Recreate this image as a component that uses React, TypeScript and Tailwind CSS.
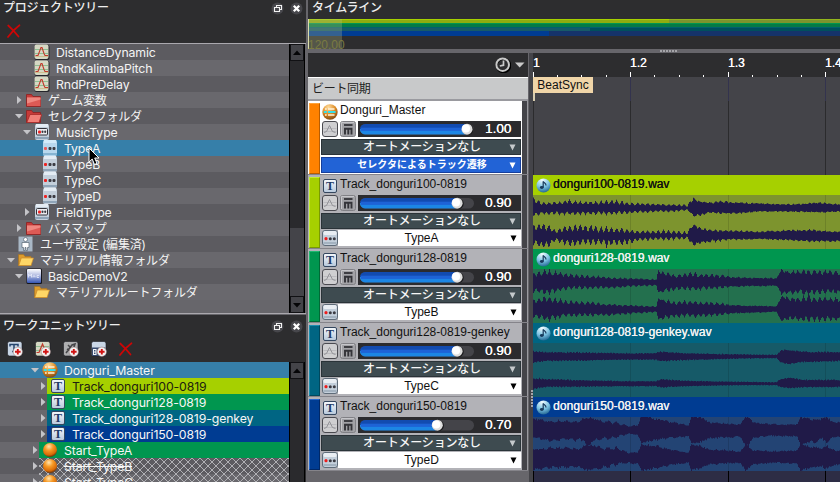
import React from "react";

const LATIN = "font-['Inter','Noto_Sans_CJK_JP',sans-serif]";
const HELV = "font-['Liberation_Sans','Noto_Sans_CJK_JP',sans-serif]";

/* ---------- small icons ---------- */

function GraphIcon() {
  return (
    <svg width="16" height="16" viewBox="0 0 16 16" className="shrink-0">
      <rect x="0.5" y="1" width="15" height="15" rx="2" fill="#24242a" />
      <rect x="0.5" y="0.5" width="14" height="14.5" rx="2" fill="#d6d8c4" />
      <path d="M1 5.5h13M1 9.5h13" stroke="#8fbf93" />
      <path d="M1 12.5h13" stroke="#cdbf90" />
      <path d="M1.500 11.500h2.500L7 3.500h1l2 6 1 2h3" fill="none" stroke="#c0392b" strokeWidth="1.100" />
    </svg>
  );
}

function RedFolder({ open = false }: { open?: boolean }) {
  return (
    <svg width="16" height="16" viewBox="0 0 16 16" className="shrink-0">
      <path d="M0.5 2.5h5l1.500 2h7.500v10h-14z" fill="#c63a38" stroke="#8e2020" strokeWidth="0.8" />
      {open ? (
        <path d="M4 6.500h11.700l-2.600 8H0.800z" fill="#f08078" stroke="#a52a28" strokeWidth="0.8" />
      ) : (
        <path d="M1 5.500h13.500V14H1z" fill="#dc5a55" />
      )}
      {!open && <path d="M1 5.500h13.500v2L1 11.500z" fill="#ee8881" />}
    </svg>
  );
}

function YellowFolder() {
  return (
    <svg width="16" height="16" viewBox="0 0 16 16" className="shrink-0">
      <path d="M0.5 2.5h5l1.500 2h6v9h-12.500z" fill="#dd9c2c" stroke="#a87424" strokeWidth="0.7" />
      <path d="M3.300 6h12.200l-2.400 7.500H0.800z" fill="#ffd766" stroke="#c8892b" strokeWidth="0.7" />
    </svg>
  );
}

function SelectorIcon({ framed = false, light = false }: { framed?: boolean; light?: boolean }) {
  return (
    <svg width="16" height="16" viewBox="0 0 16 16" className="shrink-0">
      <rect x="1" y="0" width="14" height="16" rx="2" fill={light ? "#b8d8ee" : "#c3cfdb"} />
      <rect x="2" y="0" width="12" height="3" fill={light ? "#d3ebfa" : "#e4ecf4"} />
      <rect x="1" y="13" width="14" height="2" fill={light ? "#86b4d2" : "#8fa4b8"} />
      {framed && <rect x="2.500" y="4.500" width="11" height="6.500" rx="1" fill="#ececf0" stroke="#33333a" />}
      <rect x={framed ? 4 : 2} y={framed ? 6.5 : 7} width="3" height="3" rx="1" fill={light ? "#e85a5a" : "#e22"} />
      <rect x={framed ? 7.5 : 6.5} y={framed ? 6.5 : 7} width={framed ? 2 : 3} height={framed ? 2.5 : 3} rx="1" fill="#3b3b42" />
      <rect x={framed ? 10.2 : 10.5} y={framed ? 6.5 : 7} width={framed ? 2 : 3} height={framed ? 2.5 : 3} rx="1" fill="#3b3b42" />
    </svg>
  );
}

function SelectorButtonIcon() {
  return (
    <svg width="16" height="16" viewBox="0 0 16 16" className="shrink-0">
      <rect x="0.500" y="0.500" width="15" height="15" rx="2.500" fill="#c3cfdb" stroke="#5f6c79" />
      <rect x="1.500" y="1" width="13" height="4" rx="1.500" fill="#e9eef3" />
      <rect x="1.500" y="12" width="13" height="2" fill="#a3b2c0" />
      <circle cx="4" cy="8.700" r="1.600" fill="#ee1c1c" />
      <circle cx="8.300" cy="8.700" r="1.500" fill="#3b3b42" />
      <circle cx="12.300" cy="8.700" r="1.500" fill="#3b3b42" />
    </svg>
  );
}

function UserIcon() {
  return (
    <svg width="16" height="16" viewBox="0 0 16 16" className="shrink-0">
      <rect x="0.500" y="0.500" width="14" height="15" fill="#a9b8c6" />
      <circle cx="7.500" cy="3.500" r="2" fill="#fff" stroke="#586572" strokeWidth="0.700" />
      <path d="M4 6.500h7v5H9.500v3h-1.500v-3h-1v3H5.500v-3H4z" fill="#fff" stroke="#586572" strokeWidth="0.700" />
    </svg>
  );
}

function MacIcon() {
  return (
    <svg width="16" height="16" viewBox="0 0 16 16" className="shrink-0">
      <defs>
        <linearGradient id="mac" x1="0" y1="0" x2="0" y2="1">
          <stop offset="0" stopColor="#fff" />
          <stop offset="0.450" stopColor="#b4bde2" />
          <stop offset="1" stopColor="#3656b4" />
        </linearGradient>
      </defs>
      <rect x="0.500" y="0.500" width="15.500" height="15.500" rx="1.500" fill="#15151c" />
      <rect x="1" y="1" width="14" height="14" rx="1" fill="url(#mac)" />
      <path d="M2.500 9.500V6l1.500 2 1.500-2v3.500M7 9.500V8h2v1.500M13 7.500h-2v2h2" fill="none" stroke="#e9ecfa" strokeWidth="0.800" />
    </svg>
  );
}

function TIcon() {
  return (
    <span className="flex h-[14px] w-[14px] shrink-0 items-center justify-center rounded-[2px] border border-[#34475f] bg-gradient-to-b from-[#f2f6fa] to-[#b9cadd] font-['Liberation_Serif',serif] text-[12px] leading-none font-bold text-[#1d3a64]">
      T
    </span>
  );
}

function MasterBall() {
  return (
    <svg width="16" height="16" viewBox="0 0 16 16" className="block shrink-0">
      <defs>
        <radialGradient id="mball" cx="0.4" cy="0.2" r="0.9">
          <stop offset="0" stopColor="#ffdc9c" />
          <stop offset="0.500" stopColor="#dd8a24" />
          <stop offset="1" stopColor="#6b3c10" />
        </radialGradient>
      </defs>
      <circle cx="8" cy="8" r="7.700" fill="url(#mball)" />
      <path d="M3 5h1.700M6 5h6.500M3 11h1.700M6 11h6.500" stroke="#fff3dc" strokeWidth="1.500" />
      <path d="M1.800 8h3M6 8h7.500" stroke="#35dfe8" strokeWidth="2" />
    </svg>
  );
}

function OrangeBall() {
  return (
    <svg width="16" height="16" viewBox="0 0 16 16" className="shrink-0">
      <defs>
        <radialGradient id="oball" cx="0.42" cy="0.25" r="0.75">
          <stop offset="0" stopColor="#ffe4b0" />
          <stop offset="0.400" stopColor="#f79a26" />
          <stop offset="0.800" stopColor="#d86a08" />
          <stop offset="1" stopColor="#6b3206" />
        </radialGradient>
      </defs>
      <circle cx="8" cy="8" r="7" fill="url(#oball)" />
    </svg>
  );
}

function WaveBall() {
  return (
    <svg width="15" height="15" viewBox="0 0 15 15" className="shrink-0">
      <defs>
        <radialGradient id="wball" cx="0.4" cy="0.1" r="0.95">
          <stop offset="0" stopColor="#f4fcff" />
          <stop offset="0.550" stopColor="#7cc4e4" />
          <stop offset="1" stopColor="#1b5f8c" />
        </radialGradient>
      </defs>
      <circle cx="7.500" cy="7.500" r="7" fill="url(#wball)" />
      <path d="M7.200 3.500v6" stroke="#173a5c" strokeWidth="1.200" />
      <path d="M7.200 3.500c.5 1.500 3 1.500 2.800 4" fill="none" stroke="#173a5c" strokeWidth="1.200" />
      <ellipse cx="5.800" cy="9.500" rx="1.900" ry="1.400" fill="#173a5c" />
    </svg>
  );
}

function RedX() {
  return (
    <svg width="14" height="14" viewBox="0 0 14 14" className="shrink-0">
      <path d="M1.200 1.500C4 4 8 8 11.500 12.500M12.500 1.200C8 4.500 4.500 8 1 13" fill="none" stroke="#cc0606" strokeWidth="1.700" strokeLinecap="round" />
    </svg>
  );
}

function AddIcon({ kind }: { kind: "t" | "g" | "r" | "b" }) {
  return (
    <svg width="16" height="16" viewBox="0 0 16 16" className="shrink-0">
      <rect x="0.500" y="0.500" width="14.500" height="14.500" rx="2" fill={kind === "r" ? "#aeaeb0" : kind === "g" ? "#d6d8c4" : "#c9d6e6"} stroke="#1d1d22" strokeWidth="0.600" />
      {kind === "t" && <path d="M3 5.500V3.500h8v2M7 3.500v7M5.200 10.500H9" fill="none" stroke="#24436c" strokeWidth="1.500" />}
      {kind === "g" && (
        <>
          <path d="M1 5.500h13M1 9.500h13" stroke="#8fbf93" />
          <path d="M1.500 11.500h2.500L7.500 3l3 7" fill="none" stroke="#c0392b" strokeWidth="1.200" />
        </>
      )}
      {kind === "r" && <path d="M3 12l6-8 3-1-1 3-4 4M5 4l3 3M4 8l5 3" fill="none" stroke="#454548" strokeWidth="1.500" />}
      {kind === "b" && (
        <>
          <rect x="1" y="6.500" width="13.500" height="8.500" fill="#35486c" />
          <path d="M2.500 8.500h2.500v5H2.500zM2.500 11h2.500" fill="none" stroke="#f1f4fa" strokeWidth="1.100" />
        </>
      )}
      <circle cx="10.800" cy="10.800" r="4.700" fill="#f4f1f1" stroke="#8d7070" strokeWidth="0.500" />
      <path d="M10.800 8v5.600M8 10.800h5.600" stroke="#d01414" strokeWidth="1.900" />
    </svg>
  );
}

function Arrow({ dir }: { dir: "right" | "down" | "none" }) {
  return (
    <svg width="8" height="8" viewBox="0 0 8 8" className="shrink-0">
      {dir === "right" && <path d="M2 0v8l4.500-4z" fill="#c4c4c8" />}
      {dir === "down" && <path d="M0 2h8L4 6.500z" fill="#c4c4c8" />}
    </svg>
  );
}

/* ---------- panel chrome ---------- */

function PanelTitle({ title }: { title: string }) {
  return (
    <div className="flex h-4 items-center pr-[3px] pl-[3px]">
      <span className={`${LATIN} text-[12px] leading-4 font-medium tracking-[-0.250px] text-[#eeeeee]`}>{title}</span>
      <svg width="32" height="13" viewBox="0 0 32 13" className="ml-auto">
        <circle cx="6.500" cy="6.500" r="6" fill="#47474c" />
        <path d="M5.500 5V3.500h5v4H9M3.500 5.500h5v4h-5z" fill="none" stroke="#f2f2f2" strokeWidth="1.100" />
        <circle cx="25.500" cy="6.500" r="6" fill="#47474c" />
        <path d="M22.800 3.800l5.400 5.400M28.200 3.800l-5.400 5.400" stroke="#fff" strokeWidth="2.300" />
      </svg>
    </div>
  );
}

function ScrollButton({ up = false }: { up?: boolean }) {
  return (
    <div className="flex h-[17px] shrink-0 items-center justify-center border border-[#111114] bg-[#444449]">
      <svg width="8" height="6" viewBox="0 0 8 6">
        <path d={up ? "M4 0.500L8 5H0z" : "M4 5.500L8 1H0z"} fill="#050507" />
      </svg>
    </div>
  );
}

/* ---------- project tree ---------- */

type TreeRow = { indent: number; arrow?: "right" | "down"; icon: React.ReactNode; text: string; jp?: boolean; selected?: boolean };

const projectRows: TreeRow[] = [
  { indent: 34, icon: <GraphIcon />, text: "DistanceDynamic" },
  { indent: 34, icon: <GraphIcon />, text: "RndKalimbaPitch" },
  { indent: 34, icon: <GraphIcon />, text: "RndPreDelay" },
  { indent: 26, arrow: "right", icon: <RedFolder />, text: "ゲーム変数", jp: true },
  { indent: 26, arrow: "down", icon: <RedFolder open />, text: "セレクタフォルダ", jp: true },
  { indent: 34, arrow: "down", icon: <SelectorIcon framed />, text: "MusicType" },
  { indent: 42, icon: <SelectorIcon light />, text: "TypeA", selected: true },
  { indent: 42, icon: <SelectorIcon />, text: "TypeB" },
  { indent: 42, icon: <SelectorIcon />, text: "TypeC" },
  { indent: 42, icon: <SelectorIcon />, text: "TypeD" },
  { indent: 34, arrow: "right", icon: <SelectorIcon framed />, text: "FieldType" },
  { indent: 26, arrow: "right", icon: <RedFolder />, text: "バスマップ", jp: true },
  { indent: 18, icon: <UserIcon />, text: "ユーザ設定 (編集済)", jp: true },
  { indent: 18, arrow: "down", icon: <YellowFolder />, text: "マテリアル情報フォルダ", jp: true },
  { indent: 26, arrow: "down", icon: <MacIcon />, text: "BasicDemoV2" },
  { indent: 34, icon: <YellowFolder />, text: "マテリアルルートフォルダ", jp: true },
];

function ProjectTree() {
  return (
    <div className="flex h-[314px] shrink-0 flex-col bg-[#2d2d2f]">
      <div className="h-[43px] shrink-0">
        <PanelTitle title="プロジェクトツリー" />
        <div className="pt-[8px] pl-[7px]">
          <RedX />
        </div>
      </div>
      <div className="flex h-[271px] border-y border-[#aaa8ae] bg-[#67666b]">
        <div className="w-[289px]">
          {projectRows.map((r, i) => (
            <div key={i} className={`flex h-4 items-center ${r.selected ? "bg-[#367fa9]" : i % 2 ? "bg-[#69686d]" : "bg-[#5c5b60]"}`}>
              <div className="flex shrink-0 justify-end pr-[3px]" style={{ width: r.indent }}>
                <Arrow dir={r.arrow ?? "none"} />
              </div>
              {r.icon}
              <span
                className={`${LATIN} ml-[6px] pt-[2px] leading-[14px] whitespace-nowrap text-[#f4f4f4] ${r.jp ? "text-[12px] tracking-[-0.200px]" : "text-[12.300px] tracking-[-0.120px]"}`}
              >
                {r.text}
              </span>
            </div>
          ))}
        </div>
        <div className="flex w-4 flex-col border-x border-black bg-[#2a2a2d]">
          <ScrollButton up />
          <div className="flex-1" />
          <div className="h-[68px] bg-[#444449]" />
          <ScrollButton />
        </div>
      </div>
    </div>
  );
}

/* ---------- work unit tree ---------- */

const unitRows = [
  { text: "Donguri_Master", bg: "bg-[#367fa9]", row: "bg-[#367fa9]", kind: "master" },
  { text: "Track_donguri100-0819", bg: "bg-[#a6d000]", row: "bg-[#69686d]", kind: "track", dark: true },
  { text: "Track_donguri128-0819", bg: "bg-[#00964f]", row: "bg-[#5c5b60]", kind: "track" },
  { text: "Track_donguri128-0819-genkey", bg: "bg-[#006583]", row: "bg-[#69686d]", kind: "track" },
  { text: "Track_donguri150-0819", bg: "bg-[#003c92]", row: "bg-[#5c5b60]", kind: "track" },
  { text: "Start_TypeA", bg: "bg-[#00964f]", row: "bg-[#69686d]", kind: "start" },
  { text: "Start_TypeB", bg: "hatch", row: "bg-[#5c5b60]", kind: "start" },
  { text: "Start_TypeC", bg: "hatch", row: "bg-[#69686d]", kind: "start" },
];

const HATCH =
  "bg-[repeating-linear-gradient(45deg,#b0b0b4_0px,#b0b0b4_0.900px,transparent_0.900px,transparent_5.657px),repeating-linear-gradient(-45deg,#b0b0b4_0px,#b0b0b4_0.900px,transparent_0.900px,transparent_5.657px)]";

function UnitTree() {
  return (
    <div className="flex h-[168px] shrink-0 flex-col overflow-hidden border-t border-[#67666b] bg-[#2d2d2f]">
      <div className="h-[47px] shrink-0 pt-[3px]">
        <PanelTitle title="ワークユニットツリー" />
        <div className="flex items-center gap-3 pt-[7px] pl-[7px]">
          <AddIcon kind="t" />
          <AddIcon kind="g" />
          <AddIcon kind="r" />
          <AddIcon kind="b" />
          <RedX />
        </div>
      </div>
      <div className="flex h-[130px]">
        <div className="w-[289px]">
          {unitRows.map((r, i) => (
            <div key={i} className={`flex h-4 items-center ${r.row}`}>
              <div className={`flex shrink-0 items-center justify-end ${r.kind === "track" ? "w-[47px]" : "w-[39px]"}`}>
                <Arrow dir={i === 0 ? "down" : "right"} />
              </div>
              <div className={`flex h-4 flex-1 items-center ${r.bg === "hatch" ? HATCH : r.bg} ${r.kind === "track" ? "pl-1" : "pl-[3px]"}`}>
                {r.kind === "master" ? <MasterBall /> : r.kind === "start" ? <OrangeBall /> : <TIcon />}
                <span
                  className={`${LATIN} pt-[2px] leading-[14px] whitespace-nowrap text-[12.300px] tracking-[-0.120px] ${r.kind === "track" ? "ml-[7px]" : "ml-[6px]"} ${r.dark ? "text-[#202010]" : "text-[#f6f6f6]"} ${r.bg === "hatch" ? "line-through" : ""}`}
                >
                  {r.text}
                </span>
              </div>
            </div>
          ))}
        </div>
        <div className="flex w-4 flex-col border-x border-black bg-[#2a2a2d]">
          <ScrollButton up />
        </div>
      </div>
    </div>
  );
}

/* ---------- track headers ---------- */

const tracks = [
  { name: "Donguri_Master", bar: "bg-[#ff8200] border-l-[#ffa238] border-t-[#ffa238] border-r-[#b95d00] border-b-[#b95d00]", vol: 1, type: "" },
  { name: "Track_donguri100-0819", bar: "bg-[#a6d000] border-l-[#c4ee30] border-t-[#c4ee30] border-r-[#7a9a00] border-b-[#7a9a00]", vol: 0.9, type: "TypeA" },
  { name: "Track_donguri128-0819", bar: "bg-[#00964f] border-l-[#20b870] border-t-[#20b870] border-r-[#006a36] border-b-[#006a36]", vol: 0.9, type: "TypeB" },
  { name: "Track_donguri128-0819-genkey", bar: "bg-[#006583] border-l-[#1a8fb0] border-t-[#1a8fb0] border-r-[#00485e] border-b-[#00485e]", vol: 0.9, type: "TypeC" },
  { name: "Track_donguri150-0819", bar: "bg-[#003c92] border-l-[#2468d0] border-t-[#2468d0] border-r-[#002868] border-b-[#002868]", vol: 0.7, type: "TypeD" },
];

function VolumeRow({ vol }: { vol: number }) {
  const x = 9 + vol * 99;
  return (
    <div className="flex h-4">
      <svg width="16" height="16" viewBox="0 0 16 16" className="ml-px">
        <rect x="0.500" y="0.500" width="15" height="15" rx="2.500" fill="#cfcfd1" stroke="#4a4a50" />
        <path d="M1.500 7.500h13M1.500 10.500h13" stroke="#b6b6ba" strokeWidth="0.800" />
        <path d="M2 11.500l2.500-1 3-6 3 6 3 1" fill="none" stroke="#939398" />
      </svg>
      <svg width="16" height="16" viewBox="0 0 16 16" className="ml-[2px]">
        <rect x="0.500" y="0.500" width="15" height="15" rx="2" fill="#a2a2a6" stroke="#808085" />
        <path d="M1.500 14V1.500H14" fill="none" stroke="#c6c6ca" />
        <path d="M4 4h8.500" stroke="#333338" strokeWidth="1.800" />
        <path d="M5 13.500V7.800h6.500v5.700M8.300 8v5.500" fill="none" stroke="#333338" strokeWidth="1.900" />
      </svg>
      <div className="ml-[2px] flex w-[163px] items-center bg-[#2b2b2e]">
        <svg width="120" height="16" viewBox="0 0 120 16">
          <rect x="2" y="3" width="114" height="10.500" rx="5.200" fill="#444449" />
          <path d={`M${x} 3H7a5 5 0 0 0-5 5.200H${x}z`} fill="#124bb0" />
          <path d={`M${x} 13.500H7a5 5 0 0 1-5-5.500H${x}z`} fill="#1c86e4" />
          <rect x="3" y="6.700" width={x - 3} height="3.200" fill="#1e63d6" />
          <ellipse cx={x + 2} cy="8.700" rx="5.600" ry="5.500" fill="#18181a" />
          <circle cx={x + 1} cy="8.200" r="5.500" fill="#dedede" />
          <circle cx={x} cy="7.500" r="4" fill="#ffffff" />
        </svg>
        <span className={`${HELV} ml-[7px] text-[13.500px] leading-4 text-white [text-shadow:0.300px_0_0_#fff]`}>{vol.toFixed(2)}</span>
      </div>
    </div>
  );
}

function Drop({ color = "#fff" }: { color?: string }) {
  return (
    <svg width="7" height="7" viewBox="0 0 7 7" className="mr-[4px] shrink-0">
      <path d="M0.500 0.500h6L3.500 6.500z" fill={color} />
    </svg>
  );
}

function TrackHeader({ t }: { t: (typeof tracks)[number] }) {
  const master = t.type === "";
  return (
    <div className={`flex h-[74px] border-b border-[#85848a] ${master ? "bg-white" : "bg-[#b2b2b7]"}`}>
      <div className={`mt-[2px] ml-[1px] h-[71px] w-[11px] border ${t.bar}`} />
      <div className="ml-px flex w-[200px] flex-col">
        <div className="flex h-5 items-center pl-px">
          {master ? (
            <span className="pt-[2px]">
              <MasterBall />
            </span>
          ) : (
            <span className="mx-px mt-[2px]">
              <TIcon />
            </span>
          )}
          <span className={`${HELV} mb-[3px] ml-[2px] whitespace-nowrap text-[12px] leading-4 text-[#111]`}>{t.name}</span>
        </div>
        <VolumeRow vol={t.vol} />
        <div className="mt-[2px] flex h-4 items-center border border-[#2a3338] bg-[#3e4b50]">
          <span className={`${HELV} flex-1 pl-[13px] text-center text-[12px] leading-[14px] font-medium tracking-[-0.200px] text-[#f6f6f6]`}>オートメーションなし</span>
          <Drop color="#c5cacc" />
        </div>
        {master ? (
          <div className="mt-[2px] flex h-4 items-center border border-[#163f9c] bg-[#2263d6]">
            <span className={`${HELV} flex-1 pl-[13px] text-center text-[10px] leading-[14px] font-bold text-white`}>セレクタによるトラック遷移</span>
            <Drop />
          </div>
        ) : (
          <div className="mt-px flex h-4 items-center bg-[#b2b2b7] pl-px">
            <SelectorButtonIcon />
            <div className="flex h-4 flex-1 items-center bg-white">
              <span className={`${HELV} flex-1 pr-[5px] text-center text-[12px] leading-4 text-[#111]`}>{t.type}</span>
              <Drop color="#000" />
            </div>
          </div>
        )}
      </div>
      <div className="ml-px w-[5px] bg-[#444449]" />
      <div className="flex-1 bg-[#9a9a9f]" />
    </div>
  );
}

/* ---------- waveforms ---------- */

/* Envelope knot: x, upward amplitude, downward amplitude, spike depth (0..1). */
type Knot = [number, number, number, number];

function sample(knots: Knot[], x: number, k: 1 | 2 | 3) {
  let i = 0;
  while (i < knots.length - 2 && knots[i + 1][0] <= x) i++;
  const a = knots[i];
  const b = knots[i + 1];
  const f = Math.min(1, Math.max(0, (x - a[0]) / (b[0] - a[0])));
  return a[k] + (b[k] - a[k]) * f;
}

function noise(n: number) {
  const s = Math.sin(n * 12.9898 + 4.1) * 43758.5453;
  return s - Math.floor(s);
}

function wavePath(knots: Knot[], cy: number, period: number, seed: number) {
  const up: string[] = [];
  const down: string[] = [];
  for (let x = 0; x < 307; x++) {
    const d = sample(knots, x, 3);
    const beat = Math.floor(x / period);
    const ripple = 0.5 + 0.5 * Math.cos((2 * Math.PI * x) / period);
    const peakU = 1.1 - 0.45 * d * noise(beat + seed);
    const peakD = 1.1 - 0.45 * d * noise(beat + seed + 300);
    const u = sample(knots, x, 1) * peakU * (1 - d * (1 - ripple)) * (1 - 0.18 * noise(x + seed));
    const v = sample(knots, x, 2) * peakD * (1 - d * (1 - ripple)) * (1 - 0.18 * noise(x + seed + 500));
    up.push(`L${x} ${(cy - u).toFixed(1)}L${x + 1} ${(cy - u).toFixed(1)}`);
    down.push(`L${x + 1} ${(cy + v).toFixed(1)}L${x} ${(cy + v).toFixed(1)}`);
  }
  return `M0 ${cy}${up.join("")}${down.reverse().join("")}Z`;
}

type Lane = { name: string; head: string; body: string; text: string; period: number; cy: [number, number]; ch: [Knot[], Knot[]] };

const lanes: Lane[] = [
  {
    name: "donguri100-0819.wav", head: "bg-[#a6d000]", body: "bg-[#7d942e]", text: "text-[#111]", period: 5.2, cy: [13, 40.5],
    ch: [
      [[0, 11, 9, 0.4], [8, 6, 7, 0.4], [30, 7, 7, 0.4], [36, 9, 8, 0.4], [55, 7, 7, 0.45], [84, 9, 7, 0.5], [95, 6, 7, 0.5], [108, 5, 5, 0.4], [140, 4, 4, 0.4], [154, 4, 3, 0.6], [160, 11, 9, 0.15], [166, 7, 8, 0.2], [176, 6, 5, 0.2], [192, 7, 6, 0.2], [205, 6, 6, 0.2], [225, 5, 4, 0.2], [260, 4, 4, 0.2], [285, 6, 5, 0.2], [307, 4, 4, 0.2]],
      [[0, 13, 11, 0.5], [14, 12, 14, 0.5], [22, 6, 6, 0.5], [34, 11, 11, 0.55], [60, 12, 11, 0.6], [82, 8, 13, 0.6], [96, 7, 9, 0.6], [106, 5, 5, 0.5], [130, 6, 5, 0.6], [154, 5, 5, 0.7], [160, 12, 10, 0.15], [168, 7, 8, 0.2], [180, 6, 7, 0.3], [195, 6, 5, 0.3], [225, 4, 4, 0.2], [255, 6, 5, 0.2], [278, 6, 7, 0.2], [307, 4, 6, 0.2]],
    ],
  },
  {
    name: "donguri128-0819.wav", head: "bg-[#00964f]", body: "bg-[#23704e]", text: "text-[#f2f2f2]", period: 5.4, cy: [13, 40],
    ch: [
      [[0, 10, 11, 0.4], [14, 13, 13, 0.4], [30, 10, 9, 0.4], [50, 8, 8, 0.4], [75, 5, 7, 0.3], [100, 4, 5, 0.3], [123, 3, 4, 0.3], [125, 12, 12, 0.2], [140, 8, 9, 0.4], [160, 10, 9, 0.4], [190, 8, 7, 0.4], [197, 5, 5, 0.15], [243, 4, 4, 0.15], [248, 13, 13, 0.1], [258, 12, 12, 0.3], [275, 14, 14, 0.4], [307, 11, 12, 0.3]],
      [[0, 10, 10, 0.4], [14, 13, 13, 0.4], [30, 10, 9, 0.4], [50, 8, 8, 0.4], [75, 5, 7, 0.3], [100, 4, 5, 0.3], [123, 3, 4, 0.3], [125, 12, 11, 0.2], [140, 8, 9, 0.4], [160, 9, 9, 0.4], [190, 7, 7, 0.4], [197, 4, 5, 0.15], [243, 3, 3, 0.15], [248, 13, 13, 0.1], [258, 12, 11, 0.3], [275, 14, 14, 0.4], [307, 11, 12, 0.3]],
    ],
  },
  {
    name: "donguri128-0819-genkey.wav", head: "bg-[#006583]", body: "bg-[#165a68]", text: "text-[#f2f2f2]", period: 3.1, cy: [13.5, 40.5],
    ch: [
      [[0, 6, 7, 0.2], [12, 5, 5, 0.2], [50, 4.5, 4.5, 0.2], [90, 3.5, 3.5, 0.15], [122, 3.5, 3.5, 0.15], [128, 5.5, 5, 0.2], [150, 3.5, 4, 0.15], [200, 2.5, 2.5, 0.2], [243, 2, 2, 0.3], [247, 6, 6, 0.1], [255, 7, 8, 0.1], [270, 5, 6, 0.1], [307, 5, 5, 0.2]],
      [[0, 6, 6, 0.2], [12, 5, 4, 0.2], [50, 3.5, 3.5, 0.2], [90, 2.5, 3, 0.15], [122, 2.5, 3, 0.15], [128, 5, 4.5, 0.2], [150, 3, 3, 0.15], [200, 2, 2, 0.2], [243, 1.5, 2, 0.3], [247, 5, 4, 0.1], [255, 6, 5, 0.1], [270, 4, 4, 0.1], [307, 4, 4, 0.2]],
    ],
  },
  {
    name: "donguri150-0819.wav", head: "bg-[#003c92]", body: "bg-[#234474]", text: "text-[#f2f2f2]", period: 8.3, cy: [13, 40],
    ch: [
      [[0, 13, 8, 0.1], [15, 10, 12, 0.2], [30, 10, 11, 0.2], [45, 9, 11, 0.2], [51, 12, 11, 0.1], [54, 13, 18, 0.05], [60, 12, 11, 0.1], [70, 10, 10, 0.2], [82, 9, 9, 0.3], [95, 4, 4, 0.2], [104, 5, 5, 0.1], [108, 14, 13, 0.05], [125, 11, 10, 0.1], [140, 8, 8, 0.1], [155, 5, 7, 0.1], [158, 14, 14, 0.05], [168, 13, 12, 0.05], [175, 8, 9, 0.1], [207, 6, 7, 0.1], [212, 14, 16, 0.05], [214, 14, 16, 0.05], [220, 8, 8, 0.1], [240, 6, 6, 0.1], [264, 6, 7, 0.1], [267, 14, 15, 0.05], [276, 12, 13, 0.1], [283, 11, 14, 0.2], [289, 12, 9, 0.1], [294, 14, 15, 0.1], [298, 9, 8, 0.1], [307, 8, 7, 0.1]],
      [[0, 8, 13, 0.1], [15, 10, 12, 0.2], [30, 10, 12, 0.2], [45, 9, 11, 0.2], [54, 13, 14, 0.05], [62, 12, 13, 0.1], [70, 10, 12, 0.2], [82, 11, 9, 0.3], [95, 5, 7, 0.2], [104, 5, 7, 0.1], [108, 13, 14, 0.05], [125, 11, 11, 0.1], [140, 7, 8, 0.1], [155, 5, 6, 0.1], [158, 13, 14, 0.05], [168, 11, 11, 0.05], [175, 8, 8, 0.1], [207, 6, 6, 0.1], [212, 13, 14, 0.05], [220, 7, 8, 0.1], [240, 6, 6, 0.1], [264, 7, 7, 0.1], [267, 13, 14, 0.05], [276, 11, 12, 0.1], [289, 9, 10, 0.1], [294, 12, 13, 0.1], [298, 8, 9, 0.1], [307, 6, 8, 0.1]],
    ],
  },
];

const beats = [
  { label: "1", left: "left-0" },
  { label: "1.2", left: "left-[97px]" },
  { label: "1.3", left: "left-[195px]" },
  { label: "1.4", left: "left-[292px]" },
];

function Timeline() {
  return (
    <div className="flex w-[307px] flex-col overflow-hidden bg-[#444449]">
      <div className="relative h-6 shrink-0 bg-[#2d2d2f]">
        {beats.map((b) => (
          <span key={b.label} className={`${HELV} absolute top-[2px] text-[12px] leading-4 text-white [text-shadow:0.300px_0_0_#fff] ${b.left}`}>
            {b.label}
          </span>
        ))}
        <svg width="307" height="5" className="absolute bottom-0 left-0" shapeRendering="crispEdges">
          <path d="M0 0h1v5h-1zM97 0h1v5h-1zM195 0h1v5h-1zM292 0h1v5h-1zM24 3h1v2h-1zM48 3h1v2h-1zM73 3h1v2h-1zM121 3h1v2h-1zM146 3h1v2h-1zM170 3h1v2h-1zM219 3h1v2h-1zM244 3h1v2h-1zM268 3h1v2h-1z" fill="#fff" />
        </svg>
      </div>
      <div className="relative h-[98px] shrink-0">
        <svg width="307" height="98" className="absolute top-0 left-0" shapeRendering="crispEdges">
          <path d="M97 0h1v24h-1zM195 0h1v24h-1zM292 0h1v24h-1z" fill="#33334e" />
          <path d="M0 24h1v74h-1zM97 24h1v74h-1zM195 24h1v74h-1zM292 24h1v74h-1z" fill="#2b2b2d" />
          <rect width="2" height="24" fill="#d8cdb0" />
        </svg>
        <div className={`${HELV} absolute top-0 left-0 flex h-4 w-[60px] items-center justify-center bg-[#f0d5a8] text-[12px] text-[#111]`}>BeatSync</div>
      </div>
      {lanes.map((l, i) => (
        <div key={l.name} className="h-[74px] shrink-0">
          <div className={`flex h-5 items-center pl-[3px] ${l.head}`}>
            <WaveBall />
            <span className={`${HELV} mb-[2px] ml-[2px] whitespace-nowrap text-[12px] leading-4 tracking-[0.050px] ${l.text} [text-shadow:0.300px_0_0_currentColor]`}>{l.name}</span>
          </div>
          <svg width="307" height="54" viewBox="0 0 307 54" className={`block ${l.body}`}>
            <path d="M97 0h1v54h-1zM195 0h1v54h-1zM292 0h1v54h-1z" fill="#000" opacity="0.120" />
            {l.ch.map((k, c) => (
              <path key={c} d={wavePath(k, l.cy[c], l.period, i * 31 + c * 97)} fill="#201a48" />
            ))}
          </svg>
        </div>
      ))}
      <svg width="307" height="11" className="block bg-[#2d2d45]" shapeRendering="crispEdges">
        <path d="M0 0h1v11h-1zM97 0h1v11h-1zM195 0h1v11h-1zM292 0h1v11h-1z" fill="#000" />
      </svg>
    </div>
  );
}

/* ---------- overview strip ---------- */

function Overview() {
  return (
    <div className="h-[30px] bg-[#2d2d2f]">
      <svg width="532" height="30" className="block" shapeRendering="crispEdges">
        <rect y="0" width="532" height="4" fill="#8fac10" />
        <rect x="361" y="0" width="171" height="4" fill="#7d942e" />
        <rect y="0" width="361" height="1" fill="#a6d000" />
        <rect x="361" y="0" width="171" height="1" fill="#93b51c" />
        <rect y="4" width="532" height="4" fill="#067a45" />
        <rect y="4" width="532" height="1" fill="#00964f" />
        <rect y="8" width="282" height="4" fill="#165a68" />
        <rect x="282" y="8" width="250" height="4" fill="#004f5d" />
        <rect y="8" width="532" height="1" fill="#005f70" />
        <rect y="12" width="241" height="5" fill="#003c92" />
        <rect x="241" y="12" width="291" height="5" fill="#15336a" />
        <rect y="0" width="34" height="30" fill="#b9c290" opacity="0.280" />
        <rect y="0" width="1" height="30" fill="#d9dcae" />
        <text x="0" y="29.500" fill="#7a7a42" fontSize="12" fontFamily="Liberation Sans, sans-serif">
          120.00
        </text>
      </svg>
    </div>
  );
}

export default function App() {
  return (
    <div className="relative flex h-[482px] w-[840px] overflow-hidden bg-[#67666b] select-none">
      <div className="flex w-[306px] shrink-0 flex-col">
        <ProjectTree />
        <UnitTree />
      </div>
      <div className="ml-[2px] flex w-[532px] shrink-0 flex-col">
        <div className="h-[19px] shrink-0 bg-[#2d2d2f] pl-[4px]">
          <span className={`${LATIN} block text-[12px] leading-[15px] font-medium tracking-[-0.250px] text-[#eeeeee]`}>タイムライン</span>
        </div>
        <Overview />
        <div className="flex h-1 shrink-0 items-center justify-center bg-[#67666b] pl-[190px]">
          <div className="h-[2px] w-[18px] bg-[repeating-linear-gradient(90deg,#a5a5a9_0px,#a5a5a9_2px,transparent_2px,transparent_3px)]" />
        </div>
        <div className="flex h-[429px]">
          <div className="flex w-[220px] flex-col">
            <div className="flex h-6 shrink-0 items-center justify-end bg-[#2d2d2f]">
              <svg width="16" height="16" viewBox="0 0 16 16">
                <circle cx="8.500" cy="8.500" r="6.800" fill="none" stroke="#000" strokeWidth="2" />
                <circle cx="7.700" cy="7.700" r="6.300" fill="none" stroke="#c9c9c9" strokeWidth="2" />
                <path d="M8.500 3.500v4.700L4.800 9" fill="none" stroke="#c9c9c9" strokeWidth="1.700" />
              </svg>
              <svg width="10" height="6" viewBox="0 0 10 6" className="mr-[3px] ml-[4px]">
                <path d="M0 0.500h9.500L4.700 5.500z" fill="#c9c9c9" />
              </svg>
            </div>
            <div className="flex h-6 shrink-0 items-center border-t border-b-2 border-[#9a9a9f] border-t-white bg-[#c8c9ca] pl-[4px]">
              <span className={`${HELV} text-[12px] leading-4 tracking-[-0.300px] text-[#222]`}>ビート同期</span>
            </div>
            {tracks.map((t) => (
              <TrackHeader key={t.name} t={t} />
            ))}
          </div>
          <div className="flex w-[5px] flex-col border-l border-[#67666b] bg-[#444449] pt-[337px] pl-[2px]">
            <div className="h-[18px] w-[2px] bg-[repeating-linear-gradient(180deg,#a5a5a9_0px,#a5a5a9_2px,transparent_2px,transparent_3px)]" />
          </div>
          <Timeline />
        </div>
      </div>
      <svg width="13" height="20" viewBox="0 0 13 20" className="absolute top-[147px] left-[88px]">
        <path d="M1 1v14l3.200-3 2.300 5.500 2.500-1.100L6.700 11H11z" fill="#000" stroke="#fff" strokeWidth="1" />
      </svg>
    </div>
  );
}
